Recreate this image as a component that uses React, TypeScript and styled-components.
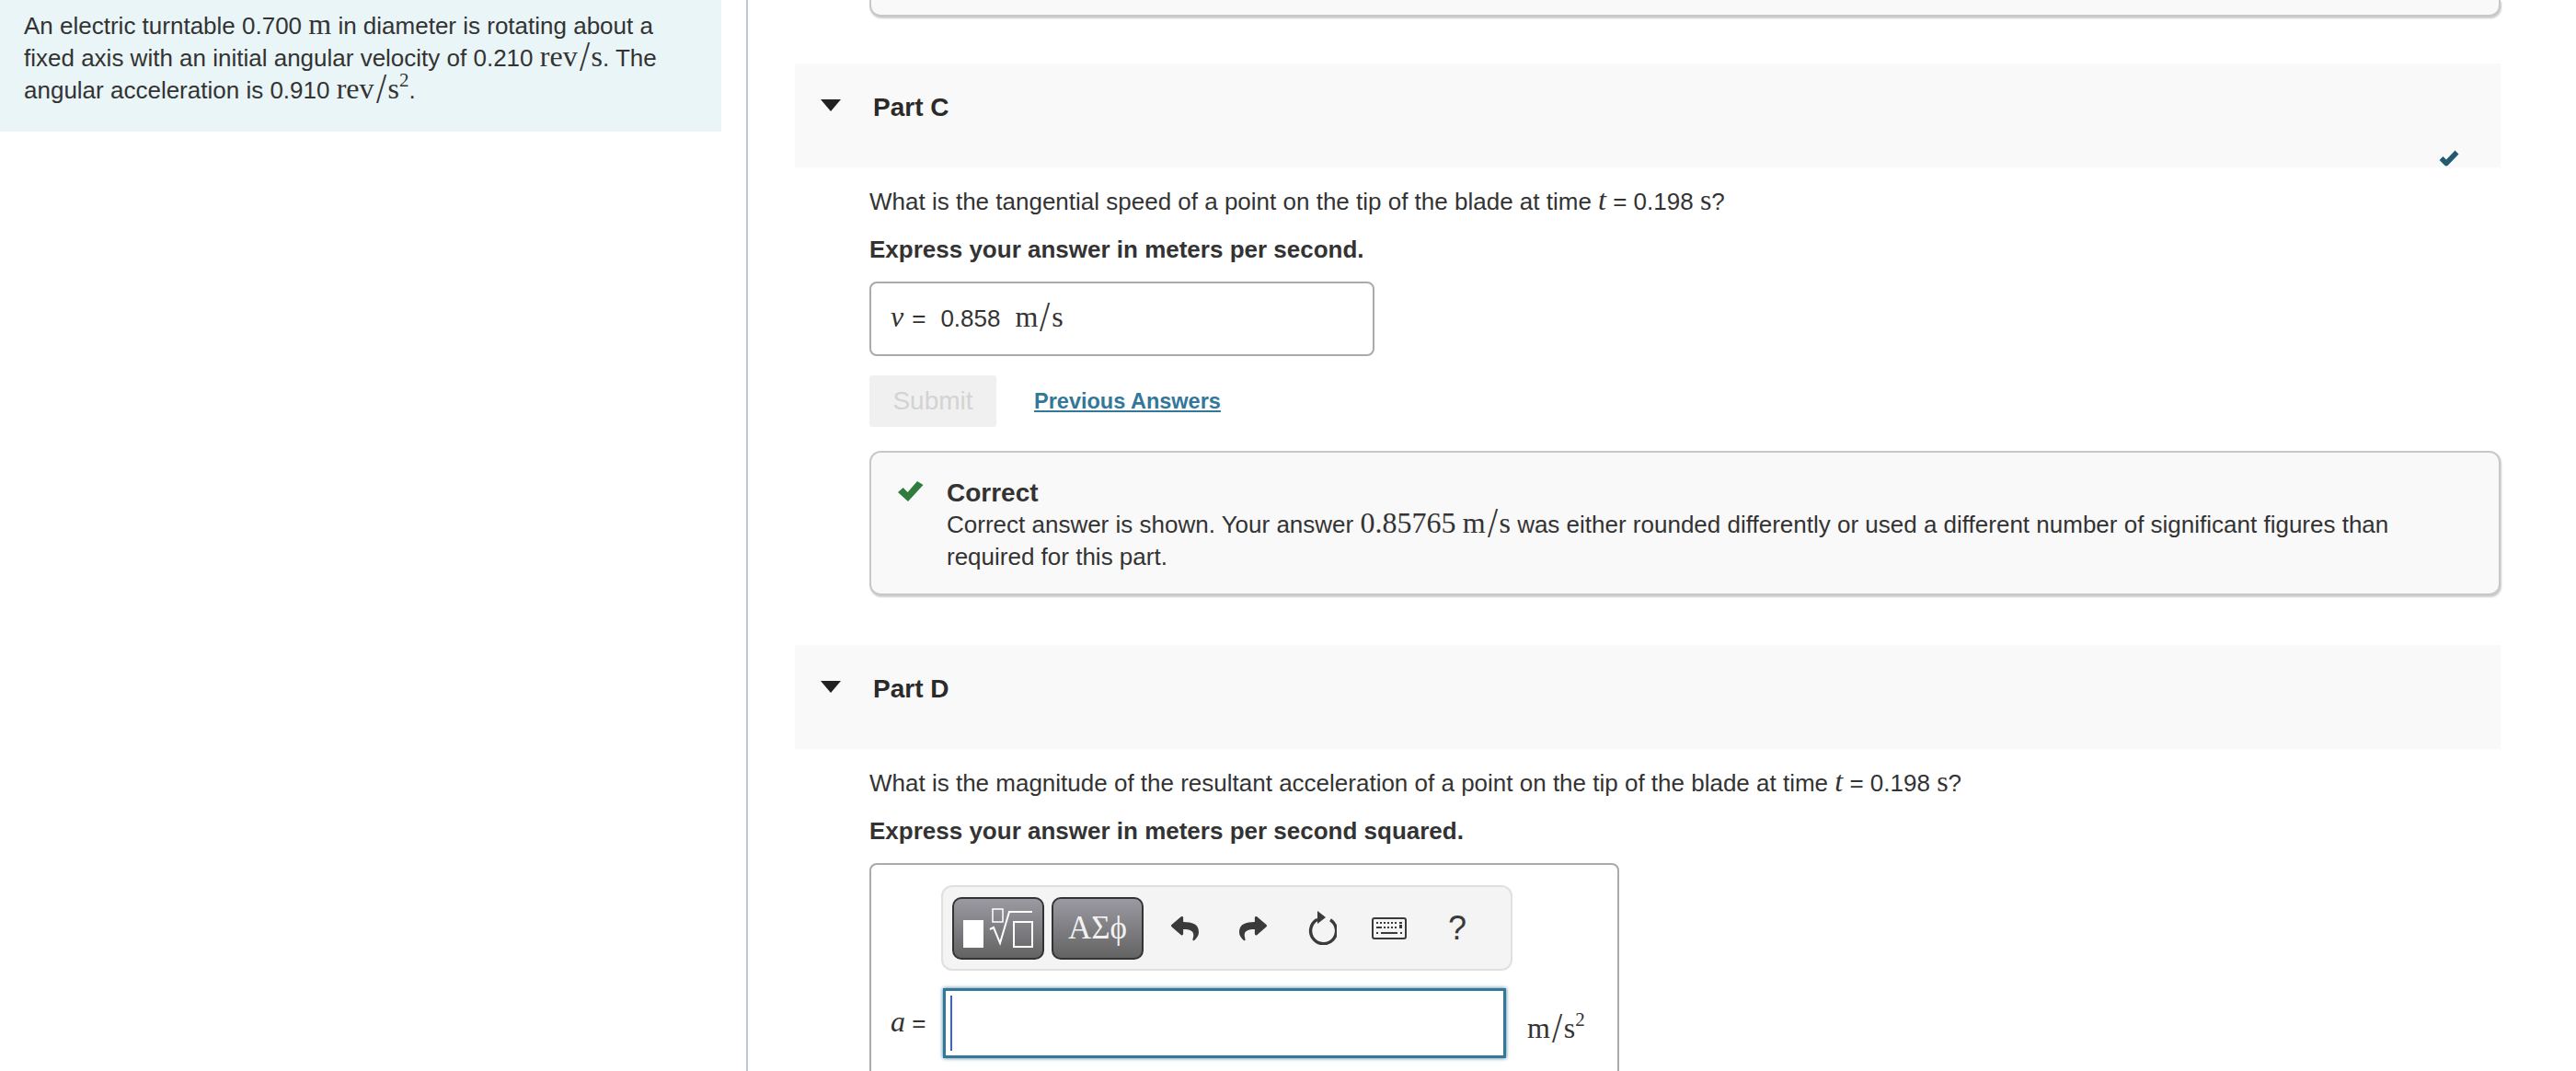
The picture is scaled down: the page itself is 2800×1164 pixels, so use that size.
import React from "react";
import styled, { createGlobalStyle } from "styled-components";
import { FaReply, FaShare } from "react-icons/fa";

const GlobalStyle = createGlobalStyle`
  html, body {
    margin: 0;
    padding: 0;
    background: #fff;
    overflow: hidden;
  }
  body {
    font-family: "Liberation Sans", Arial, sans-serif;
    font-size: 26px;
    line-height: 35px;
    color: #333;
  }
`;

const Page = styled.div`
  display: flex;
  width: 2800px;
  height: 1164px;
  overflow: hidden;
`;

const Sidebar = styled.aside`
  box-sizing: border-box;
  width: 813px;
  flex: none;
  border-right: 2px solid #b9cadd;
`;

const Statement = styled.div`
  box-sizing: border-box;
  width: 784px;
  height: 143px;
  padding: 11px 30px 0 26px;
  background: #e9f5f7;
`;

const Main = styled.main`
  width: 1854px;
  margin-left: 51px;
  flex: none;
`;

const PreviousFeedback = styled.div`
  box-sizing: border-box;
  height: 18px;
  margin: 0 0 51px 81px;
  background: #f9f9f9;
  border: 2px solid #c8c8c8;
  border-top: 0;
  border-radius: 0 0 12px 12px;
  box-shadow: 1px 2px 2px #ccc;
`;

const PartHeader = styled.div`
  position: relative;
  box-sizing: border-box;
  height: 113px;
  display: flex;
  align-items: flex-start;
  padding-top: 30px;
  background: #f9f9f9;
`;

const Caret = styled.span`
  width: 0;
  height: 0;
  margin: 9px 0 0 28px;
  border-left: 11px solid transparent;
  border-right: 11px solid transparent;
  border-top: 13px solid #222;
`;

const PartTitle = styled.h3`
  margin: 0 0 0 35px;
  font-size: 28px;
  line-height: 35px;
  font-weight: 700;
  color: #2a2a2a;
`;

const DoneMark = styled.svg`
  position: absolute;
  right: 44px;
  bottom: 1px;
`;

const PartBody = styled.div<{ $bottom: number }>`
  padding: 20px 0 ${(p) => p.$bottom}px 81px;
`;

const Question = styled.p`
  margin: 0 0 17px;
`;

const Instruction = styled.p`
  margin: 0 0 17px;
  font-weight: 700;
`;

const Math = styled.span`
  font-family: "Liberation Serif", "DejaVu Serif", serif;
  font-size: 32px;
  line-height: 0;
`;

const MathVar = styled(Math)`
  font-style: italic;
`;

const Slash = styled.span`
  display: inline-block;
  transform: scale(1.25, 1.45);
  margin: 0 3px;
`;

const Sup = styled.sup`
  font-size: 21px;
  line-height: 0;
  vertical-align: 13px;
`;

const AnswerBox = styled.div`
  box-sizing: border-box;
  width: 549px;
  height: 81px;
  display: flex;
  align-items: baseline;
  padding: 21px 0 0 21px;
  border: 2px solid #aaa;
  border-radius: 8px;
`;

const Equals = styled.span`
  margin: 0 16px 0 9px;
`;

const AnswerValue = styled.span`
  margin-right: 16px;
`;

const Actions = styled.div`
  display: flex;
  align-items: center;
  margin: 21px 0 26px;
`;

const SubmitButton = styled.button`
  width: 138px;
  height: 56px;
  padding: 0;
  border: 0;
  border-radius: 3px;
  background: #f0f0f0;
  color: #d3d3d3;
  font-family: inherit;
  font-size: 28px;
`;

const PreviousLink = styled.a`
  margin-left: 41px;
  font-size: 23.5px;
  font-weight: 700;
  color: #337799;
  text-decoration: underline;
`;

const Feedback = styled.div`
  box-sizing: border-box;
  height: 157px;
  display: flex;
  padding: 26px 60px 0 29px;
  background: #f9f9f9;
  border: 2px solid #c8c8c8;
  border-radius: 12px;
  box-shadow: 1px 2px 2px #ccc;
`;

const FeedbackMark = styled.svg`
  flex: none;
  margin: 5px 25px 0 0;
`;

const FeedbackTitle = styled.div`
  font-size: 28px;
  font-weight: 700;
`;

const EntryBox = styled.div`
  box-sizing: border-box;
  width: 815px;
  height: 300px;
  padding: 22px 0 0 21px;
  border: 2px solid #aaa;
  border-radius: 8px;
`;

const Toolbar = styled.div`
  box-sizing: border-box;
  width: 621px;
  height: 93px;
  margin-left: 55px;
  display: flex;
  align-items: center;
  padding: 0 0 0 10px;
  background: #f4f4f4;
  border: 2px solid #e0e0e0;
  border-radius: 12px;
`;

const PaletteButton = styled.button`
  box-sizing: border-box;
  width: 100px;
  height: 68px;
  margin-right: 8px;
  padding: 0;
  display: flex;
  align-items: center;
  justify-content: center;
  border: 2px solid #333;
  border-radius: 10px;
  background: linear-gradient(#9b9aa2, #636363);
  color: #f2f2f2;
  font-family: "Liberation Serif", serif;
  font-size: 35px;
`;

const ToolIcon = styled.span<{ $width: number }>`
  width: ${(p) => p.$width}px;
  display: flex;
  justify-content: center;
  color: #3a3a3a;
  font-size: 30px;
`;

const HelpGlyph = styled(ToolIcon)`
  font-size: 36px;
  line-height: 36px;
`;

const EntryRow = styled.div`
  display: flex;
  align-items: center;
  margin-top: 19px;
`;

const EntryLabel = styled.span`
  width: 57px;
  flex: none;
`;

const Field = styled.div`
  box-sizing: border-box;
  width: 612px;
  height: 76px;
  padding: 5px 5px;
  border: 3px solid #337799;
  box-shadow: 0 0 4px #337799;
`;

const Cursor = styled.div`
  width: 2px;
  height: 60px;
  background: #3a63d6;
`;

const Unit = styled(Math)`
  margin-left: 23px;
`;

const ResetIcon = () => (
  <svg width="33" height="37" viewBox="0 0 33 37" fill="none">
    <path d="M12 9.3A14 14 0 1 0 26 9.8" stroke="#3a3a3a" strokeWidth="3.4" />
    <path d="M12 0l9 7-9 7z" fill="#3a3a3a" />
  </svg>
);

const KeyboardIcon = () => (
  <svg width="38" height="24" viewBox="0 0 38 24" fill="#3a3a3a">
    <rect x="1" y="1" width="36" height="22" rx="2" fill="none" stroke="#3a3a3a" strokeWidth="2" />
    <rect x="5" y="5" width="2" height="2" />
    <rect x="9" y="5" width="2" height="2" />
    <rect x="13" y="5" width="2" height="2" />
    <rect x="17" y="5" width="2" height="2" />
    <rect x="21" y="5" width="2" height="2" />
    <rect x="25" y="5" width="2" height="2" />
    <rect x="30" y="5" width="3" height="2" />
    <rect x="5" y="10" width="6" height="2" />
    <rect x="13" y="10" width="2" height="2" />
    <rect x="17" y="10" width="2" height="2" />
    <rect x="21" y="10" width="2" height="2" />
    <rect x="25" y="10" width="2" height="2" />
    <rect x="30" y="8" width="3" height="4" />
    <rect x="5" y="16" width="2" height="2" />
    <rect x="10" y="16" width="18" height="2" />
    <rect x="31" y="16" width="2" height="2" />
  </svg>
);

const TemplatesIcon = () => (
  <svg width="76" height="43" viewBox="0 0 76 43" fill="none" stroke="#fff" strokeWidth="2">
    <rect x="1" y="14" width="20" height="28" fill="#fff" />
    <rect x="32" y="1" width="11" height="14" strokeWidth="1.5" />
    <path d="M29 23l4-2 7 17 10-34h25" strokeWidth="2" />
    <rect x="55" y="15" width="20" height="27" />
  </svg>
);

const Rate = ({ unit, sup }: { unit: string; sup?: boolean }) => {
  const [top, bottom] = unit.split("/");
  return (
    <Math>
      {top}
      <Slash>/</Slash>
      {bottom}
      {sup && <Sup>2</Sup>}
    </Math>
  );
};

const App = () => {
  return (
    <Page>
      <GlobalStyle />
      <Sidebar>
        <Statement>
          An electric turntable 0.700 <Math>m</Math> in diameter is rotating about a fixed axis with an initial angular
          velocity of 0.210 <Rate unit="rev/s" />. The angular acceleration is 0.910 <Rate unit="rev/s" sup />.
        </Statement>
      </Sidebar>
      <Main>
        <PreviousFeedback />

        <PartHeader>
          <Caret />
          <PartTitle>Part C</PartTitle>
          <DoneMark width="24" height="19" viewBox="0 0 24 19">
            <path d="M3.5 10L9 15.5 20.5 3.5" fill="none" stroke="#235a72" strokeWidth="5.5" strokeLinejoin="round" />
          </DoneMark>
        </PartHeader>
        <PartBody $bottom={54}>
          <Question>
            What is the tangential speed of a point on the tip of the blade at time <MathVar>t</MathVar> = 0.198{" "}
            <Math>s</Math>?
          </Question>
          <Instruction>Express your answer in meters per second.</Instruction>
          <AnswerBox>
            <MathVar>v</MathVar>
            <Equals>=</Equals>
            <AnswerValue>0.858</AnswerValue>
            <Rate unit="m/s" />
          </AnswerBox>
          <Actions>
            <SubmitButton>Submit</SubmitButton>
            <PreviousLink href="#">Previous Answers</PreviousLink>
          </Actions>
          <Feedback>
            <FeedbackMark width="28" height="22" viewBox="0 0 28 22">
              <polygon points="0,12 11,22 27.5,4 21,0 10.5,12 5.7,7" fill="#2e7d3e" />
            </FeedbackMark>
            <div>
              <FeedbackTitle>Correct</FeedbackTitle>
              Correct answer is shown. Your answer <Math>0.85765</Math> <Rate unit="m/s" /> was either rounded
              differently or used a different number of significant figures than required for this part.
            </div>
          </Feedback>
        </PartBody>

        <PartHeader>
          <Caret />
          <PartTitle>Part D</PartTitle>
        </PartHeader>
        <PartBody $bottom={0}>
          <Question>
            What is the magnitude of the resultant acceleration of a point on the tip of the blade at time{" "}
            <MathVar>t</MathVar> = 0.198 <Math>s</Math>?
          </Question>
          <Instruction>Express your answer in meters per second squared.</Instruction>
          <EntryBox>
            <Toolbar>
              <PaletteButton>
                <TemplatesIcon />
              </PaletteButton>
              <PaletteButton>ΑΣϕ</PaletteButton>
              <ToolIcon $width={74}>
                <FaReply />
              </ToolIcon>
              <ToolIcon $width={74}>
                <FaShare />
              </ToolIcon>
              <ToolIcon $width={74}>
                <ResetIcon />
              </ToolIcon>
              <ToolIcon $width={74}>
                <KeyboardIcon />
              </ToolIcon>
              <HelpGlyph $width={74}>?</HelpGlyph>
            </Toolbar>
            <EntryRow>
              <EntryLabel>
                <MathVar>a</MathVar> =
              </EntryLabel>
              <Field>
                <Cursor />
              </Field>
              <Unit>
                <Rate unit="m/s" sup />
              </Unit>
            </EntryRow>
          </EntryBox>
        </PartBody>
      </Main>
    </Page>
  );
};

export default App;
